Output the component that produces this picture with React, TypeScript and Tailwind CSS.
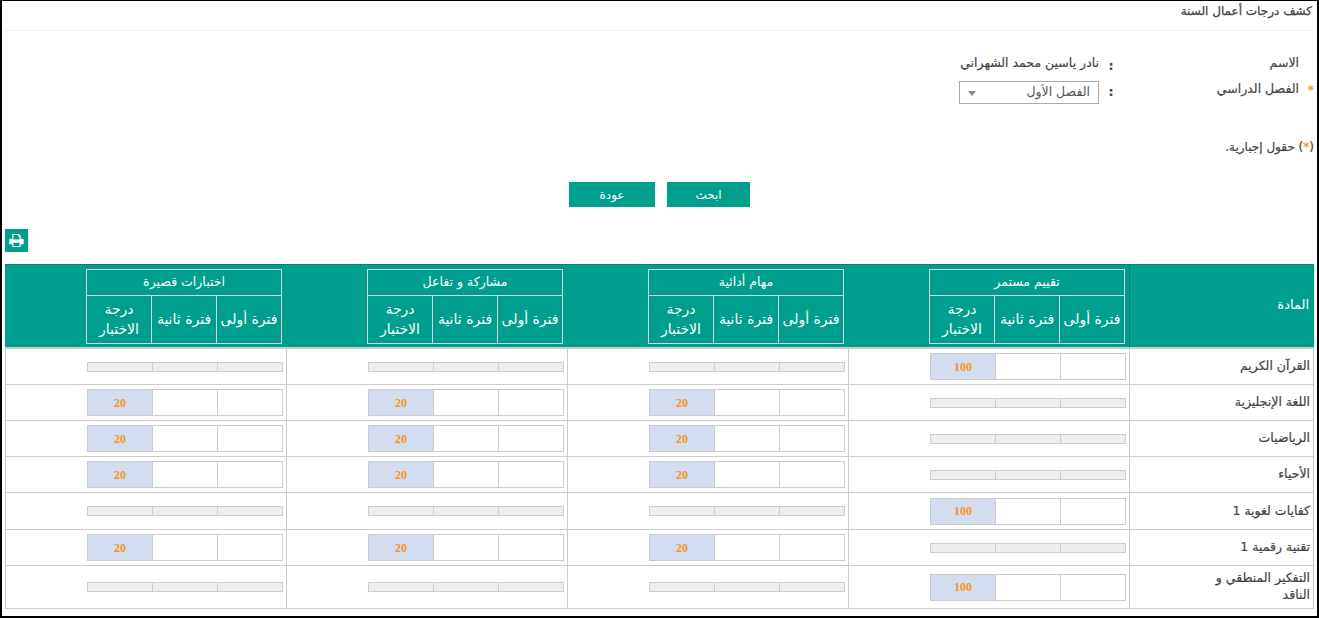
const SUBJECTS = [
  { name: "القرآن الكريم", kind: "single", h: "h-9" },
  { name: "اللغة الإنجليزية", kind: "multi", h: "h-9" },
  { name: "الرياضيات", kind: "multi", h: "h-9" },
  { name: "الأحياء", kind: "multi", h: "h-9" },
  { name: "كفايات لغوية 1", kind: "single", h: "h-[37px]" },
  { name: "تقنية رقمية 1", kind: "multi", h: "h-9" },
  { name: "التفكير المنطقي و الناقد", kind: "single", h: "h-[43px]" },
];

const GROUPS = ["تقييم مستمر", "مهام أدائية", "مشاركة و تفاعل", "اختبارات قصيرة"];

function GroupHeader({ title }: { title: string }) {
  return (
    <div className="w-[281px] flex justify-start pr-[4px] border-l border-[#0b7f70] last:border-l-0">
      <div className="w-[196px] border border-[#cfd8d6] text-white text-[12.5px]">
        <div className="h-[26px] flex items-center justify-center border-b border-[#cfd8d6]">{title}</div>
        <div className="flex h-[47px] text-[14px]">
          <div className="w-[65px] flex items-center justify-center whitespace-nowrap border-l border-[#cfd8d6]">فترة أولى</div>
          <div className="w-[65px] flex items-center justify-center whitespace-nowrap border-l border-[#cfd8d6]">فترة ثانية</div>
          <div className="flex-1 flex items-center justify-center text-center leading-[20px]">درجة الاختبار</div>
        </div>
      </div>
    </div>
  );
}

function Marks({ value }: { value?: string }) {
  if (!value) {
    return (
      <div className="w-[196px] h-[10px] flex border border-[#cccccc] bg-[#eeeeee]">
        <div className="w-[65px] border-l border-[#cccccc]" />
        <div className="w-[65px] border-l border-[#cccccc]" />
        <div className="flex-1" />
      </div>
    );
  }
  return (
    <div className="w-[196px] h-[27px] flex border border-[#cccccc] bg-white">
      <div className="w-[65px] border-l border-[#cccccc]" />
      <div className="w-[65px] border-l border-[#cccccc]" />
      <div className="flex-1 bg-[#d3ddef] flex items-center justify-center text-[12px] font-bold text-[#f7941d] font-['Liberation_Serif',serif]">
        {value}
      </div>
    </div>
  );
}

export default function App() {
  return (
    <div
      dir="rtl"
      className="w-[1319px] h-[618px] bg-white border-t border-x-2 border-b-2 border-black font-['DejaVu_Sans',sans-serif] text-[#444444] overflow-hidden"
    >
      <div className="h-[30px] mx-[3px] border-b border-[#eeeeee] flex items-start pr-[2px] text-[12px] leading-[20px] [-webkit-text-stroke:0.25px]">
        كشف درجات أعمال السنة
      </div>

      {/* Form */}
      <div className="pt-[22px] pr-[15px] text-[12.5px] [-webkit-text-stroke:0.2px]">
        <div className="flex items-center h-[20px]">
          <div className="w-[179px] pr-[3px]">الاسم</div>
          <div className="w-[24px] text-center font-bold translate-y-[3px]">:</div>
          <div>نادر ياسين محمد الشهراني</div>
        </div>
        <div className="flex items-center h-[23px] mt-[8px]">
          <div className="w-[179px] flex relative pb-[6px]">
            <span className="text-[#f7941d] absolute right-[-12px] top-[1px]">*</span>
            <span className="pr-[3px]">الفصل الدراسي</span>
          </div>
          <div className="w-[24px] text-center font-bold">:</div>
          <div className="w-[140px] h-[23px] border border-[#aaaaaa] flex items-center justify-between px-[8px] [-webkit-text-stroke:0px] pb-[1px]">
            <span className="text-[#555555]">الفصل الأول</span>
            <span className="w-0 h-0 border-x-[4px] border-x-transparent border-t-[5px] border-t-[#888888] mt-[2px]" />
          </div>
        </div>
      </div>

      <div className="mt-[34px] pr-[3px] text-[12px] leading-[19px] [-webkit-text-stroke:0.2px]">
        (<span className="text-[#f7941d]">*</span>) حقول إجبارية.
      </div>

      <div className="mt-[25px] flex justify-center gap-3 text-white text-[12px]">
        <button className="w-[83px] h-[25px] bg-[#009e8c]">ابحث</button>
        <button className="w-[86px] h-[25px] bg-[#009e8c]">عودة</button>
      </div>

      <div className="mt-[22px] mr-[1px] flex justify-end pl-[3px]">
        <button className="w-[23px] h-[23px] bg-[#009e8c] flex items-center justify-center">
          <svg viewBox="0 0 16 16" className="w-[15px] h-[15px]" fill="white" fillRule="evenodd">
            <path d="M3.5 1h7.2L12.500 2.800V6h2c.7 0 1.200.5 1.200 1.200V12h-3.200v3h-9v-3H.3V7.200C.3 6.500.8 6 1.500 6h2zM4.700 2.200V7h6.600V3.600H9.800V2.200zM4.700 10.500v3.300h6.600v-3.300z" />
          </svg>
        </button>
      </div>

      {/* Grades table */}
      <div className="mt-[12px] mx-[3px] w-[1309px]">
        <div className="flex h-[83px] bg-[#009e8c] border-t border-[#0b7f70] items-stretch">
          <div className="w-[185px] shrink-0 flex items-center pr-[5px] pb-[2px] text-white text-[13px] border-l border-[#0b7f70]">
            المادة
          </div>
          {GROUPS.map((g) => (
            <div key={g} className="flex items-center">
              <GroupHeader title={g} />
            </div>
          ))}
        </div>
        <div className="border-t-2 border-[#cccccc] border-x border-[#cccccc]">
          {SUBJECTS.map((s) => (
            <div key={s.name} className={`flex border-b border-[#cccccc] ${s.h}`}>
              <div className="w-[184px] shrink-0 flex items-center pr-[3px] pl-[76px] pb-[2px] text-[12.5px] border-l border-[#cccccc] leading-[17px] [-webkit-text-stroke:0.2px]">
                {s.name}
              </div>
              {GROUPS.map((g, i) => (
                <div key={g} className="w-[281px] shrink-0 flex items-center pr-[3px] border-l border-[#cccccc] last:border-l-0">
                  <Marks value={s.kind === "single" ? (i === 0 ? "100" : undefined) : i === 0 ? undefined : "20"} />
                </div>
              ))}
            </div>
          ))}
        </div>
      </div>
    </div>
  );
}
